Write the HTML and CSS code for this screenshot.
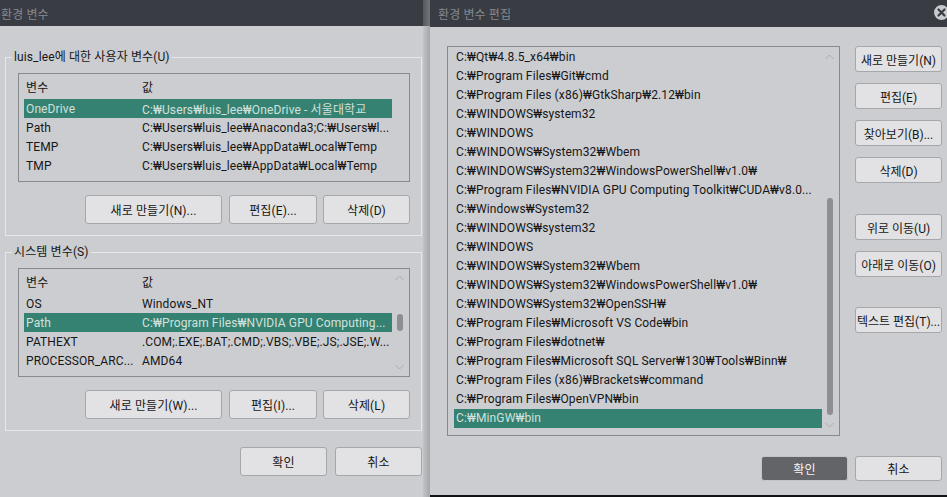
FILE: index.html
```html
<!DOCTYPE html>
<html lang="ko">
<head>
<meta charset="utf-8">
<title>환경 변수</title>
<link rel="stylesheet" href="styles.css">
</head>
<body>
<div class="screen">
  <div class="dlg-left">
    <div class="titlebar"><span class="title">환경 변수</span></div>
    <fieldset class="group g1">
      <legend>luis_lee에 대한 사용자 변수(U)</legend>
      <div class="listview lv-user">
        <div class="lv-main">
          <div class="lv-head"><span class="c1">변수</span><span class="c2">값</span></div>
          <div class="lv-row sel"><span class="c1">OneDrive</span><span class="c2">C:₩Users₩luis_lee₩OneDrive - 서울대학교</span></div>
          <div class="lv-row"><span class="c1">Path</span><span class="c2">C:₩Users₩luis_lee₩Anaconda3;C:₩Users₩l...</span></div>
          <div class="lv-row"><span class="c1">TEMP</span><span class="c2">C:₩Users₩luis_lee₩AppData₩Local₩Temp</span></div>
          <div class="lv-row"><span class="c1">TMP</span><span class="c2">C:₩Users₩luis_lee₩AppData₩Local₩Temp</span></div>
        </div>
        <div class="lv-scroll"></div>
      </div>
      <div class="btnrow">
        <div class="btn w-new">새로 만들기(N)...</div>
        <div class="btn w-edit">편집(E)...</div>
        <div class="btn w-del">삭제(D)</div>
      </div>
    </fieldset>
    <fieldset class="group g2">
      <legend>시스템 변수(S)</legend>
      <div class="listview lv-sys">
        <div class="lv-main">
          <div class="lv-head"><span class="c1">변수</span><span class="c2">값</span></div>
          <div class="lv-row"><span class="c1">OS</span><span class="c2">Windows_NT</span></div>
          <div class="lv-row sel"><span class="c1">Path</span><span class="c2">C:₩Program Files₩NVIDIA GPU Computing...</span></div>
          <div class="lv-row"><span class="c1">PATHEXT</span><span class="c2">.COM;.EXE;.BAT;.CMD;.VBS;.VBE;.JS;.JSE;.W...</span></div>
          <div class="lv-row"><span class="c1">PROCESSOR_ARC...</span><span class="c2">AMD64</span></div>
        </div>
        <div class="lv-scroll sys-scroll">
          <svg class="chev" width="9" height="6" viewBox="0 0 9 6"><path d="M0.5 5 L4.5 1 L8.5 5" fill="none" stroke="#a9aaae" stroke-width="1"/></svg>
          <div class="thumb sys-thumb"></div>
          <svg class="chev sys-down" width="9" height="6" viewBox="0 0 9 6"><path d="M0.5 1 L4.5 5 L8.5 1" fill="none" stroke="#a9aaae" stroke-width="1"/></svg>
        </div>
      </div>
      <div class="btnrow">
        <div class="btn w-new">새로 만들기(W)...</div>
        <div class="btn w-edit">편집(I)...</div>
        <div class="btn w-del">삭제(L)</div>
      </div>
    </fieldset>
    <div class="footer">
      <div class="btn w-foot">확인</div>
      <div class="btn w-foot">취소</div>
    </div>
  </div>
  <div class="shadow">
    <div class="shadow-top"></div>
    <div class="shadow-body"></div>
  </div>
  <div class="dlg-right">
    <div class="titlebar rtitle">
      <span class="title">환경 변수 편집</span>
      <div class="close">
        <svg width="15" height="15" viewBox="0 0 15 15"><path d="M4.5 4.5 L10.5 10.5 M10.5 4.5 L4.5 10.5" stroke="#3a3d44" stroke-width="2.2" stroke-linecap="round"/></svg>
      </div>
    </div>
    <div class="r-body">
      <div class="r-list">
        <div class="r-main">
          <div class="r-row">C:₩Qt₩4.8.5_x64₩bin</div>
          <div class="r-row">C:₩Program Files₩Git₩cmd</div>
          <div class="r-row">C:₩Program Files (x86)₩GtkSharp₩2.12₩bin</div>
          <div class="r-row">C:₩WINDOWS₩system32</div>
          <div class="r-row">C:₩WINDOWS</div>
          <div class="r-row">C:₩WINDOWS₩System32₩Wbem</div>
          <div class="r-row">C:₩WINDOWS₩System32₩WindowsPowerShell₩v1.0₩</div>
          <div class="r-row">C:₩Program Files₩NVIDIA GPU Computing Toolkit₩CUDA₩v8.0...</div>
          <div class="r-row">C:₩Windows₩System32</div>
          <div class="r-row">C:₩WINDOWS₩system32</div>
          <div class="r-row">C:₩WINDOWS</div>
          <div class="r-row">C:₩WINDOWS₩System32₩Wbem</div>
          <div class="r-row">C:₩WINDOWS₩System32₩WindowsPowerShell₩v1.0₩</div>
          <div class="r-row">C:₩WINDOWS₩System32₩OpenSSH₩</div>
          <div class="r-row">C:₩Program Files₩Microsoft VS Code₩bin</div>
          <div class="r-row">C:₩Program Files₩dotnet₩</div>
          <div class="r-row">C:₩Program Files₩Microsoft SQL Server₩130₩Tools₩Binn₩</div>
          <div class="r-row">C:₩Program Files (x86)₩Brackets₩command</div>
          <div class="r-row">C:₩Program Files₩OpenVPN₩bin</div>
          <div class="r-row sel">C:₩MinGW₩bin</div>
        </div>
        <div class="lv-scroll r-scroll">
          <svg class="chev" width="9" height="6" viewBox="0 0 9 6"><path d="M0.5 5 L4.5 1 L8.5 5" fill="none" stroke="#a9aaae" stroke-width="1"/></svg>
          <div class="thumb r-thumb"></div>
          <svg class="chev r-down" width="9" height="6" viewBox="0 0 9 6"><path d="M0.5 1 L4.5 5 L8.5 1" fill="none" stroke="#a9aaae" stroke-width="1"/></svg>
        </div>
      </div>
      <div class="r-btns">
        <div class="btn rb">새로 만들기(N)</div>
        <div class="btn rb gap-s">편집(E)</div>
        <div class="btn rb gap-s">찾아보기(B)...</div>
        <div class="btn rb gap-s">삭제(D)</div>
        <div class="btn rb gap-l">위로 이동(U)</div>
        <div class="btn rb gap-s">아래로 이동(O)</div>
        <div class="btn rb gap-m">텍스트 편집(T)...</div>
      </div>
    </div>
    <div class="r-footer">
      <div class="btn rf primary">확인</div>
      <div class="btn rf">취소</div>
    </div>
  </div>
</div>
</body>
</html>
```

FILE: styles.css
```css
* { box-sizing: border-box; }
html, body { margin: 0; padding: 0; }
body {
  width: 947px;
  height: 497px;
  overflow: hidden;
  background: #cccdd1;
  font-family: Roboto, "Noto Sans CJK KR", sans-serif;
  font-size: 12px;
  letter-spacing: 0.12px;
  color: #161616;
}
.screen { display: flex; height: 497px; }

.titlebar {
  height: 26px;
  flex: none;
  background: #393c43;
  color: #858990;
  display: flex;
  align-items: center;
}
.title { font-size: 12px; white-space: nowrap; }

/* left dialog */
.dlg-left {
  width: 423px;
  flex: none;
  background: #cccdd1;
  display: flex;
  flex-direction: column;
}
.dlg-left .titlebar { padding-left: 1px; }

.group {
  margin: 0 1px 0 5px;
  padding: 8px 11px 11px 6px;
  border: 1px solid #e6e7ea;
  min-width: 0;
}
.group legend {
  padding: 0 2px;
  line-height: 16px;
  font-size: 12px;
  color: #161616;
}
.g1 { margin-top: 23px; }
.g2 { margin-top: 8px; }

.listview {
  margin-left: 6px;
  height: 109px;
  border: 1px solid #898a8e;
  display: flex;
  overflow: hidden;
}
.lv-main { flex: 1; min-width: 0; padding-left: 5px; }
.lv-scroll {
  width: 17px;
  flex: none;
  display: flex;
  flex-direction: column;
  align-items: center;
  padding-right: 2px;
}
.lv-head, .lv-row { display: flex; white-space: nowrap; }
.lv-head { height: 25px; align-items: center; }
.lv-row { height: 19px; align-items: center; }
.c1 { width: 118px; flex: none; padding-left: 2px; overflow: hidden; }
.c2 { flex: 1; overflow: hidden; }
.sel { background: #358272; color: #d3e0dc; }

.chev { display: block; flex: none; }
.thumb { width: 6px; border-radius: 3px; background: #8d8e92; flex: none; }
.sys-scroll { padding-top: 6px; }
.sys-thumb { margin-top: 33px; height: 17px; }
.sys-down { margin-top: 33px; }

.btnrow { display: flex; justify-content: flex-end; margin-top: 13px; }
.btn {
  height: 29px;
  border: 1px solid #a6a7ab;
  border-radius: 3px;
  background: #e2e2e4;
  display: flex;
  align-items: center;
  justify-content: center;
  font-size: 12px;
  color: #161616;
  white-space: nowrap;
  flex: none;
}
.w-new { width: 137px; }
.w-edit { width: 88px; margin-left: 7px; }
.w-del { width: 87px; margin-left: 6px; }

.footer {
  display: flex;
  justify-content: flex-end;
  gap: 8px;
  margin-top: 16px;
  padding-right: 1px;
}
.w-foot { width: 87px; }

/* gap between dialogs */
.shadow { width: 7px; flex: none; display: flex; flex-direction: column; }
.shadow-top { height: 26px; background: linear-gradient(to right, #55585d, #74767a); }
.shadow-body { flex: 1; background: linear-gradient(to right, #c3c4c8, #a5a6aa); }

/* right dialog */
.dlg-right {
  flex: 1;
  min-width: 0;
  display: flex;
  flex-direction: column;
  background: #cccdd1;
  border-bottom: 2px solid #111214;
}
.rtitle {
  height: 27px;
  padding-left: 8px;
  justify-content: space-between;
}
.close {
  width: 15px;
  height: 15px;
  border-radius: 50%;
  background: #c8cacd;
  margin-right: -2px;
  margin-top: -2px;
}
.close svg { display: block; }

.r-body { display: flex; padding: 19px 0 0 17px; }
.r-list {
  width: 393px;
  height: 390px;
  flex: none;
  border: 1px solid #898a8e;
  display: flex;
  overflow: hidden;
}
.r-main { flex: 1; min-width: 0; padding: 1px 0 0 6px; }
.r-row {
  height: 19px;
  line-height: 19px;
  padding-left: 2px;
  white-space: nowrap;
  overflow: hidden;
}
.r-scroll { padding-top: 7px; }
.r-thumb { margin-top: 138px; height: 217px; }
.r-down { margin-top: 7px; }

.r-btns { margin-left: 15px; width: 87px; display: flex; flex-direction: column; }
.rb { height: 26px; width: 87px; letter-spacing: 0; }
.gap-s { margin-top: 11px; }
.gap-l { margin-top: 31px; }
.gap-m { margin-top: 30px; }

.r-footer {
  display: flex;
  justify-content: flex-end;
  gap: 7px;
  margin-top: 20px;
  padding-right: 5px;
}
.rf { width: 87px; height: 25px; }
.primary { background: #626468; border-color: #c4c5c9; color: #f5f5f5; }
```
